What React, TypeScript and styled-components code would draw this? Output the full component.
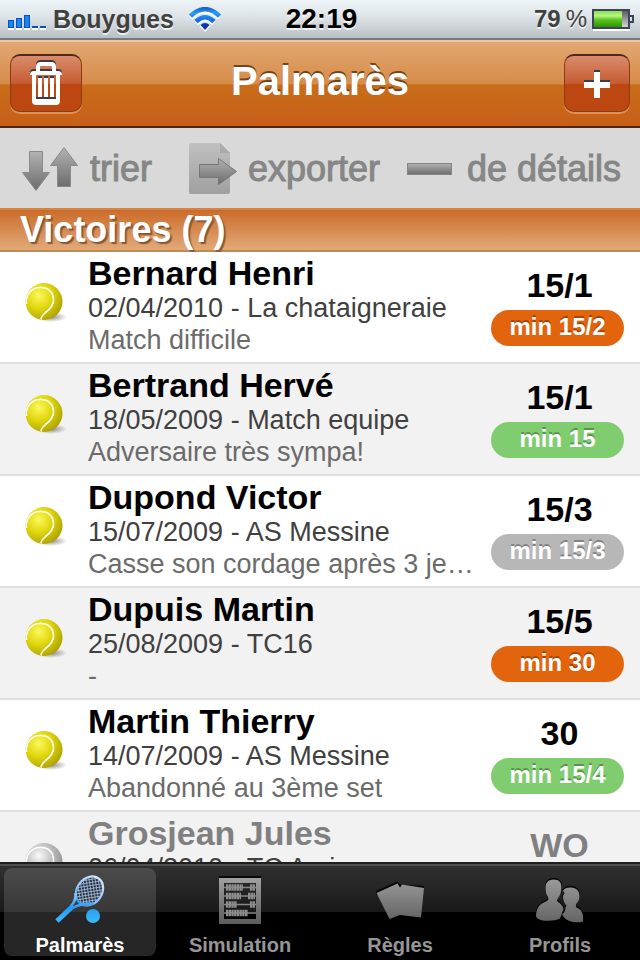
import React from "react";
import styled, { createGlobalStyle, css } from "styled-components";

const GlobalStyle = createGlobalStyle`
  * { box-sizing: border-box; }
  html, body { margin: 0; background: #000; }
  body, button { font-family: "Liberation Sans", Arial, Helvetica, sans-serif; }
  button { border: 0; padding: 0; margin: 0; background: none; color: inherit; cursor: pointer; }
  h1, h2, h3, p, ul { margin: 0; padding: 0; }
  svg { display: block; flex: none; }
`;

const Screen = styled.div`
  height: 100vh;
  display: flex;
  flex-direction: column;
  background: #fff;
  overflow: hidden;
`;

const StatusBar = styled.header`
  flex: none;
  height: 40px;
  padding: 0 5px 0 8px;
  display: grid;
  grid-template-columns: 1fr auto 1fr;
  align-items: center;
  background: linear-gradient(#eef5f8, #dde3e6 45%, #b9c0c4);
  border-bottom: 2px solid #737b80;
  font-size: 25px;
  font-weight: bold;
  line-height: 38px;
  color: #414141;
  text-shadow: 0 2px 0 rgba(255, 255, 255, 0.7);
`;

const StatusGroup = styled.div<{ $end?: boolean; $gap: number }>`
  display: flex;
  align-items: center;
  gap: ${(p) => p.$gap}px;
  justify-content: ${(p) => (p.$end ? "flex-end" : "flex-start")};
`;

const Carrier = styled.span`
  margin-right: 9px;
`;

const Clock = styled.time`
  font-size: 28px;
  color: #000;
`;

const Percent = styled.span`
  font-size: 24px;
  font-weight: normal;
`;

const Charge = styled.span`
  font-size: 24px;
`;

const NavBar = styled.nav`
  flex: none;
  height: 88px;
  padding: 0 10px 2px;
  display: grid;
  grid-template-columns: 1fr auto 1fr;
  align-items: center;
  background: linear-gradient(#e2a873, #d68b48 50%, #c96d19 51%, #c75f18);
  border-top: 2px solid #ecc69d;
  border-bottom: 2px solid #532507;
`;

const NavTitle = styled.h1`
  font-size: 40px;
  line-height: 52px;
  padding-bottom: 4px;
  color: #fff;
  text-shadow: 0 -2px 0 #75431a;
`;

const NavButton = styled.button<{ $wide?: boolean }>`
  width: ${(p) => (p.$wide ? 72 : 66)}px;
  height: 58px;
  justify-self: ${(p) => (p.$wide ? "start" : "end")};
  display: flex;
  align-items: center;
  justify-content: center;
  border: 1px solid #8d3b12;
  border-top: 2px solid #4f2a1d;
  border-radius: 10px;
  background: linear-gradient(#d98c6a, #c65b33 50%, #bd4710 51%, #bd4710);
  box-shadow: 0 2px 0 rgba(236, 178, 130, 0.6);
`;

const Toolbar = styled.div`
  flex: none;
  height: 80px;
  padding: 2px 18px 0 22px;
  display: grid;
  grid-template-columns: 167fr 218fr 215fr;
  align-items: center;
  background: #d9d9d9;
`;

const ToolButton = styled.button<{ $gap: number }>`
  display: flex;
  align-items: center;
  gap: ${(p) => p.$gap}px;
  font-size: 36px;
  line-height: 48px;
  white-space: nowrap;
  color: #868686;
  -webkit-text-stroke: 1px #868686;
`;

const SectionHeader = styled.h2`
  flex: none;
  height: 44px;
  padding: 0 20px;
  border-top: 2px solid #d58341;
  border-bottom: 2px solid #bb8b55;
  background: linear-gradient(#cb6b2a, #e2aa77);
  font-size: 36px;
  line-height: 40px;
  color: #fff;
  text-shadow: 2px 2px 1px #84583a;
`;

const MatchList = styled.ul`
  flex: 1;
  min-height: 0;
  overflow: hidden;
  list-style: none;
`;

const MatchRow = styled.li`
  height: 112px;
  padding: 0 16px 0 24px;
  display: grid;
  grid-template-columns: 64px minmax(0, 1fr) 133px;
  border-bottom: 2px solid #dfdfdf;
  background: #fff;
  &:nth-child(even) { background: #f2f2f2; }
`;

const BallCell = styled.div`
  padding-top: 30px;
`;

const Details = styled.div`
  padding-top: 2px;
  white-space: nowrap;
`;

const Opponent = styled.h3<{ $muted?: boolean }>`
  font-size: 34px;
  line-height: 38px;
  color: ${(p) => (p.$muted ? "#808080" : "#000")};
`;

const Line = styled.p<{ $note?: boolean }>`
  font-size: 27px;
  line-height: 32px;
  color: ${(p) => (p.$note ? "#6b6b6b" : "#404040")};
`;

const Result = styled.div`
  padding-top: 16px;
  text-align: center;
`;

const Score = styled.div<{ $muted?: boolean }>`
  padding-left: 4px;
  font-size: 34px;
  font-weight: bold;
  line-height: 34px;
  color: ${(p) => (p.$muted ? "#808080" : "#000")};
`;

const tones = { orange: "#e2640d", green: "#80cd70", grey: "#b7b7b7" };
type Tone = keyof typeof tones;

const Badge = styled.div<{ $tone: Tone }>`
  height: 36px;
  margin-top: 8px;
  border-radius: 18px;
  background: ${(p) => tones[p.$tone]};
  color: #fff;
  font-size: 24px;
  font-weight: bold;
  line-height: 34px;
  text-shadow: 0 -2px 0 rgba(0, 0, 0, 0.28);
`;

const TabBar = styled.nav`
  flex: none;
  height: 98px;
  display: grid;
  grid-template-columns: repeat(4, 1fr);
  padding-top: 4px;
  border-top: 2px solid #1e1e1e;
  background: linear-gradient(#4f4f4f 0 2px, #303030 2px, #191919 48px, #000 48px);
`;

const Tab = styled.button<{ $active?: boolean }>`
  height: 88px;
  margin: 0 4px;
  display: flex;
  flex-direction: column;
  align-items: center;
  justify-content: space-between;
  padding-top: 7px;
  border-radius: 8px;
  font-size: 20px;
  font-weight: bold;
  line-height: 22px;
  color: #969696;
  ${(p) =>
    p.$active &&
    css`
      color: #fff;
      background: linear-gradient(#4b4b4b, #373737 44px, #262626 44px, #262626);
    `}
`;

const SignalIcon = () => (
  <svg width="39" height="24" viewBox="0 0 39 24" aria-hidden="true">
    <g fill="#1687ee" stroke="#0b4fc4">
      <rect x=".5" y="13.500" width="5" height="7" />
      <rect x="8.500" y="11.500" width="5" height="9" />
      <rect x="16.500" y="8.500" width="5" height="12" />
    </g>
    <path d="M24 20h6M32 20h6" stroke="#0b4fc4" strokeWidth="2" />
    <path d="M0 22h38" stroke="#fff" strokeWidth="2" strokeDasharray="6 2" />
  </svg>
);

const WifiIcon = () => (
  <svg width="32" height="25" viewBox="0 0 32 25" aria-hidden="true">
    <defs>
      <linearGradient id="wifi" x1="0" y1="0" x2="0" y2="24" gradientUnits="userSpaceOnUse">
        <stop stopColor="#1157c8" />
        <stop offset=".25" stopColor="#2b9df2" />
        <stop offset=".6" stopColor="#146be8" />
        <stop offset="1" stopColor="#0639b4" />
      </linearGradient>
    </defs>
    <path d="M2 9.500Q16-4.500 30 9.500M7.500 15Q16 6.500 24.500 15" fill="none" stroke="#fff" strokeWidth="4.500" transform="translate(0 1.500)" />
    <path d="M1.500 9Q16-4.500 30.500 9M7 14.500Q16 6 25 14.500" fill="none" stroke="url(#wifi)" strokeWidth="4.500" />
    <path d="M10.500 19Q16 14 21.500 19L16 25Z" fill="#fff" />
    <path d="M11.500 18Q16 14 20.500 18L16 23Z" fill="#0639b4" />
  </svg>
);

const BatteryIcon = () => (
  <svg width="43" height="20" viewBox="0 0 43 20" aria-hidden="true" overflow="visible">
    <defs>
      <linearGradient id="charge" x2="0" y2="1">
        <stop stopColor="#80e34b" />
        <stop offset=".3" stopColor="#bcf588" />
        <stop offset=".55" stopColor="#59c61d" />
        <stop offset="1" stopColor="#2c9208" />
      </linearGradient>
      <linearGradient id="empty" x2="0" y2="1">
        <stop stopColor="#555" />
        <stop offset="1" stopColor="#ddd" />
      </linearGradient>
    </defs>
    <path d="M1 21h37" stroke="#fff" strokeWidth="2" />
    <rect x="1" y="1" width="36" height="18" fill="url(#empty)" stroke="#3f435a" strokeWidth="2" />
    <rect x="2" y="2" width="28" height="16" fill="url(#charge)" />
    <path d="M38 7h3v6h-3" fill="none" stroke="#3f435a" strokeWidth="2" />
  </svg>
);

const trash = (
  <>
    <path d="M8 11V6q0-3 3-3h10q3 0 3 3v5" fill="none" strokeWidth="4" />
    <path d="M0 14q0-4 4-4h24q4 0 4 4H0z" stroke="none" />
    <path d="M4 14v26q0 2 2 2h20q2 0 2-2V14" fill="none" strokeWidth="4" />
    <path d="M3 40h26" strokeWidth="4" />
    <path d="M10 17v19M16 17v19M22 17v19" strokeWidth="4" />
  </>
);

const TrashIcon = () => (
  <svg width="32" height="46" viewBox="0 0 32 46" aria-hidden="true" overflow="visible">
    <g fill="#3a3c4d" stroke="#3a3c4d" transform="translate(0 -2)">{trash}</g>
    <g fill="#fff" stroke="#fff">{trash}</g>
  </svg>
);

const PlusIcon = () => (
  <svg width="26" height="28" viewBox="0 0 26 28" aria-hidden="true">
    <path d="M10 0h6v10h10v8H0v-8h10z" fill="#33404d" />
    <path d="M10 2h6v10h10v6H16v10h-6V18H0v-6h10z" fill="#fff" />
  </svg>
);

const ToolGradient = ({ id }: { id: string }) => (
  <linearGradient id={id} x2="0" y2="1">
    <stop stopColor="#b2b2b2" />
    <stop offset="1" stopColor="#6c6c6c" />
  </linearGradient>
);

const SortIcon = () => (
  <svg width="56" height="44" viewBox="0 0 56 44" aria-hidden="true" overflow="visible">
    <defs><ToolGradient id="sort" /></defs>
    <g fill="url(#sort)" stroke="#8a8a8a">
      <path d="M7.500 4.500h13v21h7L14 43.500.5 25.500h7z" />
      <path d="M35.500 39.500h13v-21h7L42 .5 28.500 18.500h7z" />
    </g>
  </svg>
);

const ExportIcon = () => (
  <svg width="48" height="52" viewBox="0 0 48 52" aria-hidden="true">
    <defs>
      <ToolGradient id="exportArrow" />
      <linearGradient id="sheet" x2="0" y2="1">
        <stop stopColor="#c0c0c0" />
        <stop offset="1" stopColor="#a0a0a0" />
      </linearGradient>
    </defs>
    <path d="M3 0h28l10 10v39q0 2-2 2H2q-2 0-2-2V3q0-3 3-3z" fill="url(#sheet)" />
    <path d="M31 0v10h10z" fill="#aaa" />
    <path d="M10.500 21.500h19v-6l18 13-18 13v-7h-19z" fill="url(#exportArrow)" stroke="#777" />
  </svg>
);

const MinusIcon = () => (
  <svg width="45" height="12" viewBox="0 0 45 12" aria-hidden="true">
    <defs><ToolGradient id="minus" /></defs>
    <rect x=".5" y=".5" width="44" height="11" fill="url(#minus)" stroke="#858585" />
  </svg>
);

const BallIcon = ({ muted }: { muted?: boolean }) => {
  const id = muted ? "ballGrey" : "ballYellow";
  const [light, mid, dark] = muted ? ["#fafafa", "#c0c0c0", "#8a8a8a"] : ["#fbf85c", "#e0d60c", "#aca000"];
  return (
    <svg width="44" height="42" viewBox="0 0 44 42" aria-hidden="true">
      <defs>
        <radialGradient id={id} cx=".36" cy=".34" r=".72">
          <stop stopColor={light} />
          <stop offset=".5" stopColor={mid} />
          <stop offset="1" stopColor={dark} />
        </radialGradient>
        <radialGradient id={id + "Shade"}>
          <stop stopColor="#000" stopOpacity=".45" />
          <stop offset="1" stopColor="#000" stopOpacity="0" />
        </radialGradient>
      </defs>
      <ellipse cx="27" cy="35" rx="16" ry="5" fill={`url(#${id}Shade)`} />
      <circle cx="20" cy="19.500" r="18.500" fill={`url(#${id})`} />
      <path d="M2.500 22C1.500 12 8 5.500 16 5.500c8-.5 13.500 4.500 13.500 12.500 0 6-4 9.500-8 12.500-3 2.500-4.500 4-4.500 7" fill="none" stroke="#fff" strokeWidth="1.600" />
    </svg>
  );
};

const RacketIcon = () => (
  <svg width="50" height="50" viewBox="0 0 50 50" aria-hidden="true" overflow="visible">
    <defs>
      <linearGradient id="racket" x1="0" y1="0" x2="0" y2="50" gradientUnits="userSpaceOnUse">
        <stop stopColor="#d5e8ff" />
        <stop offset=".45" stopColor="#84bdf9" />
        <stop offset=".65" stopColor="#259bf5" />
        <stop offset="1" stopColor="#3fc0fc" />
      </linearGradient>
      <pattern id="strings" width="3" height="3" patternUnits="userSpaceOnUse" patternTransform="rotate(45)">
        <rect width="3" height="3" fill="#2c2f36" />
        <path d="M0 0H3M0 0V3" stroke="#a9c9f0" strokeWidth="1.600" />
      </pattern>
    </defs>
    <ellipse cx="34.500" cy="16" rx="12.500" ry="15.500" transform="rotate(36 34.500 16)" fill="url(#strings)" stroke="url(#racket)" strokeWidth="2.200" />
    <path d="M20.500 18Q21 26 16 31M39 28.500Q28 28 18 32.500" stroke="url(#racket)" strokeWidth="2.500" fill="none" />
    <path d="M18 31L2 46" stroke="url(#racket)" strokeWidth="5" />
    <circle cx="38" cy="41" r="7" fill="url(#racket)" />
  </svg>
);

const TabGradient = ({ id, height }: { id: string; height: number }) => (
  <linearGradient id={id} x1="0" y1="0" x2="0" y2={height} gradientUnits="userSpaceOnUse">
    <stop stopColor="#a0a0a0" />
    <stop offset="1" stopColor="#5c5c5c" />
  </linearGradient>
);

const AbacusIcon = () => (
  <svg width="42" height="50" viewBox="0 -3 42 50" aria-hidden="true">
    <defs><TabGradient id="abacus" height={46} /></defs>
    <path d="M0-1h42" stroke="#080808" strokeWidth="2" />
    <path d="M2.500 2.500h37v41h-37z" fill="none" stroke="url(#abacus)" strokeWidth="5" />
    <path d="M5 9.500h32M5 18h32M5 26.500h32M5 35h32" stroke="#888" strokeWidth="1.500" />
    <g stroke="#8d8d8d" strokeWidth="6.500" strokeDasharray="2.300 .4">
      <path d="M7 9.500h17M31 9.500h5M7 18h15M29 18h7M7 26.500h11M31 26.500h5M7 35h22" />
    </g>
  </svg>
);

const CardsIcon = () => (
  <svg width="50" height="50" viewBox="0 0 50 50" aria-hidden="true">
    <defs><TabGradient id="cards" height={50} /></defs>
    <path d="M1 16L22.500 6.500 25.500 9.500 49 11v5L1 20z" fill="#050505" />
    <path d="M1.500 18L22.500 8.500l2.500 4 2-3L49 13l-3 29.500L25 40l-10.500 4z" fill="url(#cards)" />
  </svg>
);

const people = (
  <>
    <path d="M17.500 4.500C12 4.500 9.500 8 9.500 13c0 4 1 7 2.500 9 1 3-.5 4-3 5C3 29 0 34 0 41.500c2 3.500 7 4.500 12 4.200 5 0 9-.7 12-2.200l3.500-9.500c-1-4-3-5.500-6-7.500-1-1 0-2.500 1-4 2-2.500 2.500-5.500 2.700-8 1-7-2-10-7.700-10z" />
    <path d="M35 12.500c-3.500-.5-6 .5-8 3l1.500 2.500-1.500 3c0 4 1 7 3.500 9.500l-1 2c0 3-1 5-3.500 7 2 4 6 6.500 11 7.500 4 .5 7 .5 10-.5.5-6.500-.5-11.500-5.500-13.500-2-1-2-2.500-1-4.500 2-2.500 3-4 3-7 0-5.500-3-9-8.500-9z" />
  </>
);

const PeopleIcon = () => (
  <svg width="50" height="50" viewBox="-1 0 50 50" aria-hidden="true">
    <defs><TabGradient id="people" height={54} /></defs>
    <g fill="#050505" stroke="#050505" transform="translate(0 -1)">{people}</g>
    <g fill="url(#people)">{people}</g>
  </svg>
);

interface Match {
  name: string;
  info: string;
  note: string;
  score: string;
  badge: string;
  tone: Tone;
  muted?: boolean;
}

const matches: Match[] = [
  { name: "Bernard Henri", info: "02/04/2010 - La chataigneraie", note: "Match difficile", score: "15/1", badge: "min 15/2", tone: "orange" },
  { name: "Bertrand Hervé", info: "18/05/2009 - Match equipe", note: "Adversaire très sympa!", score: "15/1", badge: "min 15", tone: "green" },
  { name: "Dupond Victor", info: "15/07/2009 - AS Messine", note: "Casse son cordage après 3 je…", score: "15/3", badge: "min 15/3", tone: "grey" },
  { name: "Dupuis Martin", info: "25/08/2009 - TC16", note: "-", score: "15/5", badge: "min 30", tone: "orange" },
  { name: "Martin Thierry", info: "14/07/2009 - AS Messine", note: "Abandonné au 3ème set", score: "30", badge: "min 15/4", tone: "green" },
  { name: "Grosjean Jules", info: "06/04/2010 - TC Ami", note: "", score: "WO", badge: "", tone: "grey", muted: true },
];

const tabs = [
  { label: "Palmarès", Icon: RacketIcon },
  { label: "Simulation", Icon: AbacusIcon },
  { label: "Règles", Icon: CardsIcon },
  { label: "Profils", Icon: PeopleIcon },
];

export default function App() {
  const [active, setActive] = React.useState("Palmarès");
  return (
    <>
      <GlobalStyle />
      <Screen>
        <StatusBar>
          <StatusGroup $gap={6}>
            <SignalIcon />
            <Carrier>Bouygues</Carrier>
            <WifiIcon />
          </StatusGroup>
          <Clock>22:19</Clock>
          <StatusGroup $end $gap={5}>
            <Charge>79</Charge>
            <Percent>%</Percent>
            <BatteryIcon />
          </StatusGroup>
        </StatusBar>

        <NavBar>
          <NavButton $wide aria-label="Supprimer"><TrashIcon /></NavButton>
          <NavTitle>Palmarès</NavTitle>
          <NavButton aria-label="Ajouter"><PlusIcon /></NavButton>
        </NavBar>

        <Toolbar>
          <ToolButton $gap={12}><SortIcon />trier</ToolButton>
          <ToolButton $gap={11}><ExportIcon />exporter</ToolButton>
          <ToolButton $gap={15}><MinusIcon />de détails</ToolButton>
        </Toolbar>

        <SectionHeader>Victoires (7)</SectionHeader>

        <MatchList>
          {matches.map((m) => (
            <MatchRow key={m.name}>
              <BallCell><BallIcon muted={m.muted} /></BallCell>
              <Details>
                <Opponent $muted={m.muted}>{m.name}</Opponent>
                <Line>{m.info}</Line>
                {m.note && <Line $note>{m.note}</Line>}
              </Details>
              <Result>
                <Score $muted={m.muted}>{m.score}</Score>
                {m.badge && <Badge $tone={m.tone}>{m.badge}</Badge>}
              </Result>
            </MatchRow>
          ))}
        </MatchList>

        <TabBar>
          {tabs.map(({ label, Icon }) => (
            <Tab
              key={label}
              $active={active === label}
              aria-current={active === label ? "page" : undefined}
              onClick={() => setActive(label)}
            >
              <Icon />
              {label}
            </Tab>
          ))}
        </TabBar>
      </Screen>
    </>
  );
}
